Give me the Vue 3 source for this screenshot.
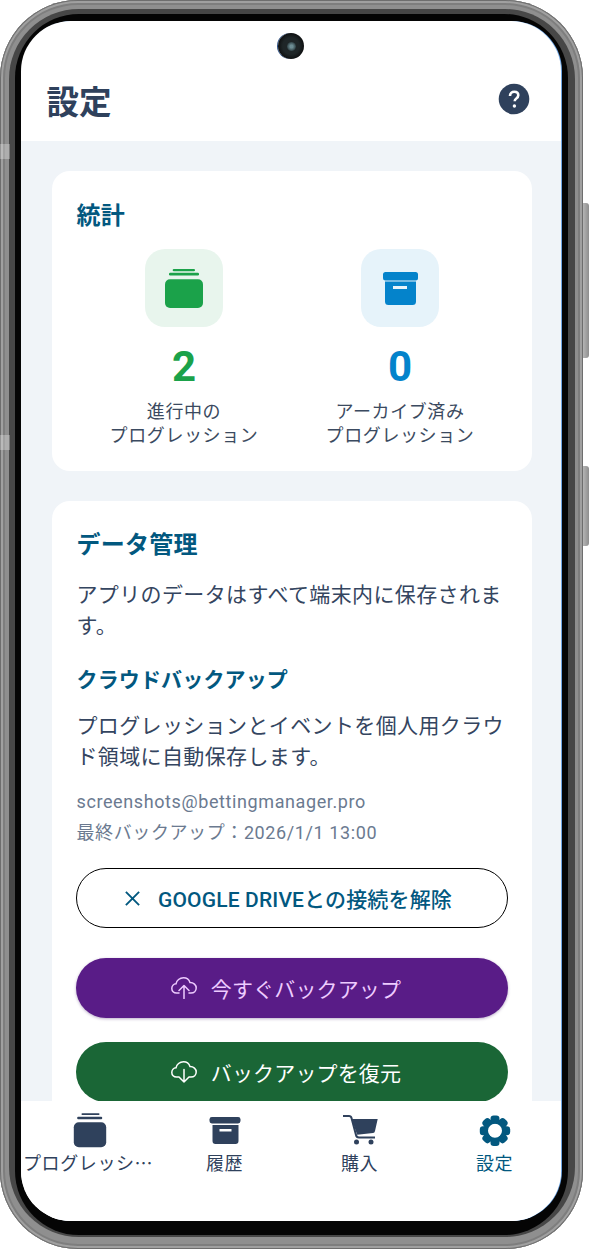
<script setup>
const stats = [
  { value: '2', tone: 'green', lines: ['進行中の', 'プログレッション'] },
  { value: '0', tone: 'blue', lines: ['アーカイブ済み', 'プログレッション'] }
]
const tabs = [
  { key: 'stack', label: 'プログレッション', active: false },
  { key: 'box', label: '履歴', active: false },
  { key: 'cart', label: '購入', active: false },
  { key: 'gear', label: '設定', active: true }
]
const teeth = [0, 45, 90, 135, 180, 225, 270, 315]
</script>

<template>
  <div class="canvas">
    <div class="phone">
      <span class="side side-a"></span>
      <span class="side side-b"></span>
      <span class="notch notch-a"></span>
      <span class="notch notch-b"></span>
      <div class="rim">
        <div class="bezel">
          <div class="screen">
            <span class="camera"><span class="lens"></span></span>
            <header class="top">
              <h1>設定</h1>
              <svg class="help" viewBox="0 0 32 32">
                <circle cx="16" cy="16" r="15.300" fill="#2f415c" />
                <path d="M12 13c0-2.800 1.800-4.200 4.300-4.200 2.400 0 4 1.400 4 3.500 0 1.500-.8 2.400-2 3.200-1.200.8-1.600 1.300-1.600 2.800" fill="none" stroke="#fff" stroke-width="2.600" />
                <circle cx="16.400" cy="23" r="1.700" fill="#fff" />
              </svg>
            </header>

            <main class="scroll">
              <section class="card stats-card">
                <h2>統計</h2>
                <div class="stats">
                  <div v-for="s in stats" :key="s.tone" class="stat" :class="s.tone">
                    <div class="tile">
                      <svg v-if="s.tone === 'green'" viewBox="0 0 38 40" class="tile-icon">
                        <rect x="7.700" y="1" width="22.300" height="2.300" rx="1.100" />
                        <rect x="4" y="4.700" width="30" height="2.800" rx="1.200" />
                        <rect x="0" y="11.200" width="38" height="28.800" rx="5" />
                      </svg>
                      <svg v-else viewBox="0 0 38 40" class="tile-icon">
                        <rect x="2" y="4" width="35" height="8.500" rx="2.500" />
                        <path fill-rule="evenodd" d="M4 13.500h31V33.500a3.500 3.500 0 0 1-3.500 3.500h-24A3.500 3.500 0 0 1 4 33.500zM12 18v3h14v-3z" />
                      </svg>
                    </div>
                    <div class="num">{{ s.value }}</div>
                    <div class="cap"><span v-for="l in s.lines" :key="l">{{ l }}</span></div>
                  </div>
                </div>
              </section>

              <section class="card data-card">
                <h2>データ管理</h2>
                <p class="body">アプリのデータはすべて端末内に保存されます。</p>
                <h3>クラウドバックアップ</h3>
                <p class="body second">プログレッションとイベントを個人用クラウド領域に自動保存します。</p>
                <p class="meta">screenshots@bettingmanager.pro</p>
                <p class="meta">最終バックアップ：2026/1/1 13:00</p>

                <button class="pill outline" type="button">
                  <svg class="x" viewBox="0 0 18 18"><path d="M2 2l14 14M16 2L2 16" fill="none" stroke="currentColor" stroke-width="2" /></svg>
                  <span>GOOGLE DRIVEとの接続を解除</span>
                </button>
                <button class="pill purple" type="button">
                  <svg class="cloud" viewBox="0 0 26 22">
                    <path d="M8 16H5.500C2.700 16 .8 14 .8 11.500.8 9 2.700 7 5 6.800 5.500 3.300 8.800.8 12.500.8c3 0 5.500 1.700 6.500 4.700 3.700 0 6.200 2.500 6.200 5.500 0 3-2.200 5-5.200 5h-2" fill="none" stroke="currentColor" stroke-width="1.500" stroke-linecap="round" />
                    <path d="M13 21.500V9M8 13.500l5-5 5 5" fill="none" stroke="currentColor" stroke-width="1.500" stroke-linecap="round" stroke-linejoin="round" />
                  </svg>
                  <span>今すぐバックアップ</span>
                </button>
                <button class="pill green" type="button">
                  <svg class="cloud" viewBox="0 0 26 22">
                    <path d="M8 16H5.500C2.700 16 .8 14 .8 11.500.8 9 2.700 7 5 6.800 5.500 3.300 8.800.8 12.500.8c3 0 5.500 1.700 6.500 4.700 3.700 0 6.200 2.500 6.200 5.500 0 3-2.200 5-5.200 5h-2" fill="none" stroke="currentColor" stroke-width="1.500" stroke-linecap="round" />
                    <path d="M13 8.500V21M8.500 16.500L13 21l4.500-4.500" fill="none" stroke="currentColor" stroke-width="1.500" stroke-linecap="round" stroke-linejoin="round" />
                  </svg>
                  <span>バックアップを復元</span>
                </button>
              </section>
            </main>

            <nav class="tabs">
              <div v-for="t in tabs" :key="t.key" class="tab" :class="{ on: t.active }">
                <svg v-if="t.key === 'stack'" class="tab-icon" viewBox="0 0 34 34">
                  <rect x="8.500" y=".3" width="18" height="1.700" rx=".8" />
                  <rect x="4.200" y="3.700" width="25" height="2.600" rx="1" />
                  <rect x=".8" y="9.300" width="32.400" height="25" rx="5" />
                </svg>
                <svg v-else-if="t.key === 'box'" class="tab-icon" viewBox="0 0 34 34">
                  <rect x="1.500" y="4" width="31" height="6.500" rx="2.400" />
                  <path fill-rule="evenodd" d="M4.500 12h26v16a3 3 0 0 1-3 3h-20a3 3 0 0 1-3-3zM11.500 16v2.500h12V16z" />
                </svg>
                <svg v-else-if="t.key === 'cart'" class="tab-icon" viewBox="0 0 34 34">
                  <path d="M0 3h6q2 0 2.500 2L13 22q.5 2.500 3 2.500h16" fill="none" stroke="currentColor" stroke-width="2" />
                  <path d="M8.500 6H34.700L32 18q-.3 1.800-2 2l-15.800 1.800z" />
                  <circle cx="13.500" cy="29" r="2.500" />
                  <circle cx="28" cy="29" r="2.500" />
                </svg>
                <svg v-else class="tab-icon" viewBox="0 0 34 34">
                  <rect v-for="a in teeth" :key="a" x="12.500" y="2.500" width="9" height="8" rx="3.200" :transform="`rotate(${a} 17 17.700)`" />
                  <path fill-rule="evenodd" d="M17 6.200a11.500 11.500 0 1 1 0 23 11.500 11.500 0 0 1 0-23zm0 4.500a7 7 0 1 0 0 14 7 7 0 0 0 0-14z" />
                </svg>
                <span class="tab-label">{{ t.label }}</span>
              </div>
            </nav>
          </div>
        </div>
      </div>
    </div>
  </div>
</template>

<style>
html, body { margin: 0; background: #fff; }
</style>

<style scoped>
.canvas {
  width: 590px;
  height: 1250px;
  overflow: hidden;
  background: #fff;
  font-family: Roboto, "Noto Sans CJK JP", sans-serif;
}
.phone {
  position: relative;
  box-sizing: border-box;
  width: 583px;
  height: 1249px;
  padding: 9px 8px 12px 9px;
  border-radius: 78px;
  background: #8f8f8f;
  box-shadow: inset 0 0 0 1px #6e6e6e, inset 0 0 0 3px #a0a0a0, inset 0 0 0 5px #7e7e7e;
}
.side {
  position: absolute;
  right: -6px;
  width: 6px;
  background: linear-gradient(90deg, #b5b5b5, #8e8e8e);
  border-radius: 0 3px 3px 0;
}
.side-a { top: 203px; height: 155px; }
.side-b { top: 466px; height: 80px; }
.notch {
  position: absolute;
  left: 0;
  width: 10px;
  height: 15px;
  background: rgba(255, 255, 255, .28);
  z-index: 1;
}
.notch-a { top: 144px; }
.notch-b { top: 435px; }
.rim {
  box-sizing: border-box;
  height: 100%;
  padding: 5px 7px 2px 6px;
  border-radius: 70px;
  background: #474747;
}
.bezel {
  box-sizing: border-box;
  height: 100%;
  padding: 7px 7px 14px 6px;
  border-radius: 64px;
  background: #050505;
}
.screen {
  position: relative;
  display: flex;
  flex-direction: column;
  width: 540px;
  height: 1200px;
  overflow: hidden;
  border-radius: 50px;
  background: #fff;
  box-shadow: 1px 0 0 #6fa5e2;
}
.camera {
  position: absolute;
  left: 257px;
  top: 12px;
  width: 26px;
  height: 26px;
  border-radius: 50%;
  background: radial-gradient(circle, #1f2628 0 45%, #0b0c0d 75%);
  box-shadow: -1px 0 0 #2a4f86;
  display: flex;
  align-items: center;
  justify-content: center;
}
.lens {
  width: 9px;
  height: 9px;
  border-radius: 50%;
  background: radial-gradient(circle, #6d8d94 0 22%, #1d2a2d 85%);
}
.top {
  flex: none;
  box-sizing: border-box;
  height: 120px;
  padding: 59px 31px 0 25.500px;
  display: flex;
  align-items: flex-start;
  justify-content: space-between;
}
h1 {
  margin: 0;
  font-size: 32.500px;
  line-height: 46px;
  font-weight: 700;
  color: #2f415c;
}
.help {
  width: 32px;
  height: 32px;
  margin-top: 3px;
}
.scroll {
  flex: 1;
  min-height: 0;
  overflow: hidden;
  padding: 30px 29px 0 31px;
  background: #f0f4f8;
}
.card {
  background: #fff;
  border-radius: 18px;
  padding: 0 25px 0 24.500px;
}
.stats-card {
  height: 300px;
  box-sizing: border-box;
  padding-top: 29px;
}
h2 {
  margin: 0;
  font-size: 24px;
  line-height: 32px;
  font-weight: 700;
  letter-spacing: .225px;
  color: #02587f;
}
.stats {
  display: grid;
  grid-template-columns: 216px 216px;
  margin: 17px -1px 0 -.5px;
}
.stat {
  display: flex;
  flex-direction: column;
  align-items: center;
}
.tile {
  width: 78px;
  height: 78px;
  border-radius: 20px;
  display: flex;
  align-items: center;
  justify-content: center;
}
.tile-icon {
  width: 38px;
  height: 40px;
  fill: currentColor;
}
.stat.green { color: #1ba24a; }
.stat.blue { color: #0483cb; }
.stat.green .tile { background: #e8f5ed; }
.stat.blue .tile { background: #e6f3fa; }
.num {
  margin-top: 12px;
  font-size: 42px;
  line-height: 56px;
  font-weight: 700;
}
.cap {
  margin-top: 5px;
  display: flex;
  flex-direction: column;
  align-items: center;
  font-size: 18px;
  line-height: 24px;
  letter-spacing: .6px;
  color: #3b4a60;
}
.data-card {
  margin-top: 30px;
  padding-top: 28px;
  padding-bottom: 40px;
}
.body {
  margin: 19px 0 0;
  font-size: 21px;
  line-height: 31px;
  letter-spacing: .375px;
  color: #344560;
}
h3 {
  margin: 22.500px 0 0;
  font-size: 21px;
  line-height: 30px;
  font-weight: 700;
  letter-spacing: .15px;
  color: #02587f;
}
.body.second { margin-top: 16.500px; }
.meta {
  margin: 0;
  font-size: 18px;
  line-height: 31px;
  letter-spacing: .6px;
  color: #6b7a90;
}
.body.second + .meta { margin-top: 12.500px; }
.pill {
  display: flex;
  align-items: center;
  justify-content: center;
  box-sizing: border-box;
  width: 432px;
  height: 60px;
  margin: 0 0 0 -.5px;
  padding: 0 12px 0 0;
  border: 0;
  border-radius: 30px;
  font-family: inherit;
  font-size: 21px;
  letter-spacing: .15px;
}
.outline {
  margin-top: 20.500px;
  padding-right: 8px;
  background: #fff;
  border: 1.800px solid #000;
  color: #02587f;
  font-weight: 500;
  gap: 17px;
}
.x { width: 17px; height: 17px; }
.purple {
  margin-top: 30px;
  background: #591c87;
  color: #eeccff;
  gap: 14px;
  box-shadow: 0 1px 3px rgba(60, 20, 100, .35);
}
.green.pill {
  margin-top: 24px;
  background: #1a6636;
  color: #fff;
  gap: 14px;
}
.cloud { width: 26px; height: 22px; }
.tabs {
  flex: none;
  box-sizing: border-box;
  height: 120px;
  padding-left: 1px;
  display: grid;
  grid-template-columns: repeat(4, 135px);
  background: #fff;
  z-index: 1;
}
.tab {
  display: flex;
  flex-direction: column;
  align-items: center;
  padding-top: 12px;
  color: #2f415c;
  min-width: 0;
}
.tab.on { color: #02587f; }
.tab-icon {
  width: 34px;
  height: 34px;
  fill: currentColor;
  overflow: visible;
}
.tab-label {
  display: block;
  box-sizing: border-box;
  width: 100%;
  margin-top: 2px;
  padding: 0 1px;
  text-align: center;
  font-family: "Noto Sans CJK JP", sans-serif;
  font-size: 18px;
  line-height: 26px;
  letter-spacing: .6px;
  white-space: nowrap;
  overflow: hidden;
  text-overflow: ellipsis;
}
</style>
